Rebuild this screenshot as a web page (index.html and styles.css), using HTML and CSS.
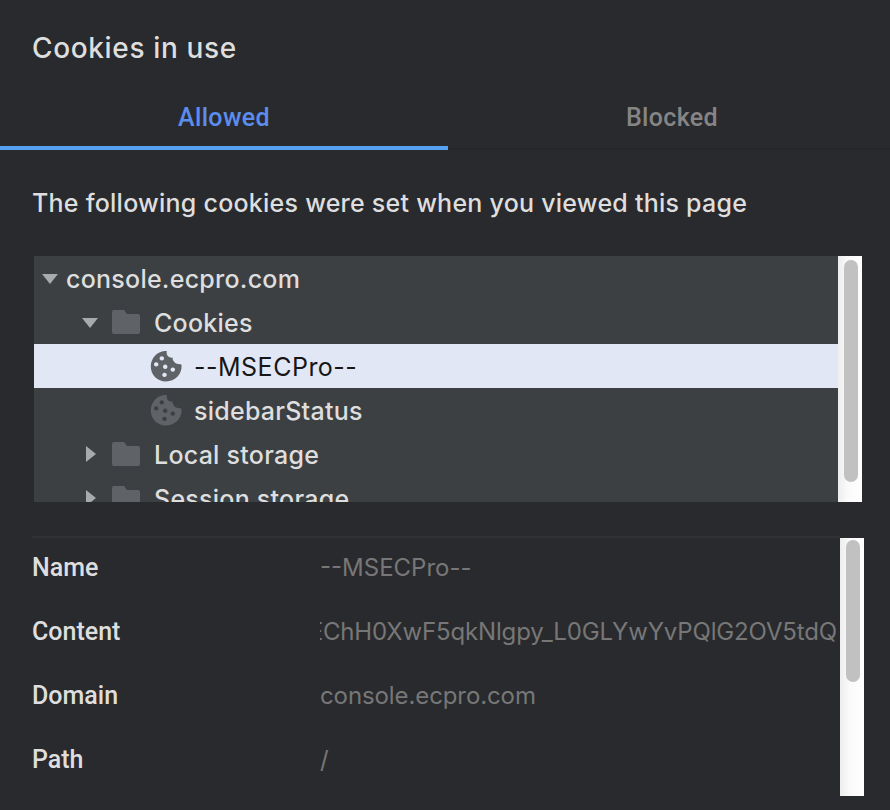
FILE: index.html
```html
<!DOCTYPE html>
<html lang="en">
<head>
<meta charset="utf-8">
<title>Cookies in use</title>
<link rel="stylesheet" href="styles.css">
</head>
<body>
<svg class="defs" width="0" height="0" aria-hidden="true">
  <symbol id="folder" viewBox="0 0 28 24"><path d="M2 0H12L15 4H26Q28 4 28 6V22Q28 24 26 24H2Q0 24 0 22V2Q0 0 2 0Z"/></symbol>
  <symbol id="cookie" viewBox="0 0 32 32"><path fill-rule="evenodd" d="M16.800 1C16 5 18.500 8 22.500 7.600C22.500 12 26.500 15 31.300 14.200C33 23 26 31.500 16 31.500C7.500 31.500 .8 25 .8 16.500C.8 7.500 8 .5 16.800 1ZM11.800 6.200a2.200 2.200 0 1 0 .01 0ZM6.200 12.200a2.200 2.200 0 1 0 .01 0ZM15.200 14.600a2.200 2.200 0 1 0 .01 0ZM22.800 17.400a2.200 2.200 0 1 0 .01 0ZM14.500 22.700a2.200 2.200 0 1 0 .01 0Z"/></symbol>
  <symbol id="down" viewBox="0 0 16 10"><path d="M0 0H16L8 10Z"/></symbol>
  <symbol id="right" viewBox="0 0 10 16"><path d="M0 0L10 8L0 16Z"/></symbol>
</svg>
<main class="dialog">
  <h1 class="title">Cookies in use</h1>
  <nav class="tabs">
    <div class="tab active">Allowed</div>
    <div class="tab">Blocked</div>
  </nav>
  <p class="intro">The following cookies were set when you viewed this page</p>
  <section class="tree">
    <div class="rows">
      <div class="row root"><svg class="down"><use href="#down"/></svg><span>console.ecpro.com</span></div>
      <div class="row group"><svg class="down"><use href="#down"/></svg><svg class="folder"><use href="#folder"/></svg><span>Cookies</span></div>
      <div class="row leaf selected"><svg class="cookie"><use href="#cookie"/></svg><span>--MSECPro--</span></div>
      <div class="row leaf"><svg class="cookie"><use href="#cookie"/></svg><span>sidebarStatus</span></div>
      <div class="row group"><svg class="right"><use href="#right"/></svg><svg class="folder"><use href="#folder"/></svg><span>Local storage</span></div>
      <div class="row group"><svg class="right"><use href="#right"/></svg><svg class="folder"><use href="#folder"/></svg><span>Session storage</span></div>
    </div>
    <div class="scrollbar"><div class="thumb"></div></div>
  </section>
  <section class="details">
    <dl class="fields">
      <dt>Name</dt><dd>--MSECPro--</dd>
      <dt>Content</dt><dd class="content"><span>EChH0XwF5qkNlgpy_L0GLYwYvPQlG2OV5tdQ</span></dd>
      <dt>Domain</dt><dd class="domain">console.ecpro.com</dd>
      <dt>Path</dt><dd>/</dd>
    </dl>
    <div class="scrollbar"><div class="thumb"></div></div>
  </section>
</main>
</body>
</html>
```
FILE: styles.css
```css
* { box-sizing: border-box; }
body { margin: 0; background: #292a2d; color: #dededf; font: 500 24px/30px Inter, sans-serif; }
.defs { position: absolute; }
.dialog { width: 890px; height: 810px; overflow: hidden; }
.title { margin: 0; padding: 32px 32px 0; height: 86px; font-size: 28px; line-height: 32px; font-weight: 450; letter-spacing: .65px; }
.tabs { display: flex; height: 64px; border-bottom: 2px solid #252629; }
.tab { flex: none; width: 448px; height: 64px; padding-top: 17px; text-align: center; color: #858585; font: 500 25px/30px Roboto, sans-serif; letter-spacing: .35px; }
.tab.active { color: #5b8def; border-bottom: 4px solid #57a1f2; }
.intro { margin: 0; padding: 38px 32px 0; height: 106px; white-space: nowrap; font-size: 25px; letter-spacing: .24px; }
.tree { display: flex; margin-left: 34px; width: 828px; height: 246px; overflow: hidden; font-size: 25px; letter-spacing: .25px; }
.rows { width: 804px; background: #3c4043; }
.row { display: flex; align-items: center; height: 44px; white-space: nowrap; }
.row span { padding-top: 2px; }
.root { padding-left: 8px; gap: 8px; }
.group { padding-left: 48px; }
.leaf { padding-left: 116px; gap: 12px; }
.down { width: 16px; height: 10px; margin-top: 2px; fill: #a8aaab; }
.right { width: 10px; height: 16px; margin: 0 2px 0 4px; fill: #a8aaab; }
.folder { width: 28px; height: 24px; margin: 0 14px; fill: #5f6368; }
.cookie { width: 32px; height: 32px; fill: #5f6368; }
.selected { background: #e1e7f4; color: #171717; font-weight: 430; letter-spacing: .5px; }
.scrollbar { width: 24px; flex: none; background: linear-gradient(90deg, #ededed, #fafafa 40%, #fff); padding: 4px 4px 0 6px; }
.thumb { width: 14px; height: 222px; border-radius: 7px; background: #c1c1c1; }
.details { display: flex; margin: 34px 0 0 32px; width: 832px; height: 260px; }
.fields { width: 808px; margin: 0; border-top: 2px solid #303134; display: grid; grid-template-columns: 288px 520px; grid-template-rows: repeat(4, 64px); line-height: 60px; }
dt { font: 500 25px/60px Roboto, sans-serif; }
dd { margin: 0; color: #777; font-weight: 400; white-space: nowrap; }
.content { overflow: hidden; display: flex; justify-content: flex-end; padding-right: 3px; letter-spacing: -.15px; }
.domain { letter-spacing: -.1px; }
.details .scrollbar { margin-top: 2px; padding-top: 2px; }
.details .thumb { height: 142px; }
```
